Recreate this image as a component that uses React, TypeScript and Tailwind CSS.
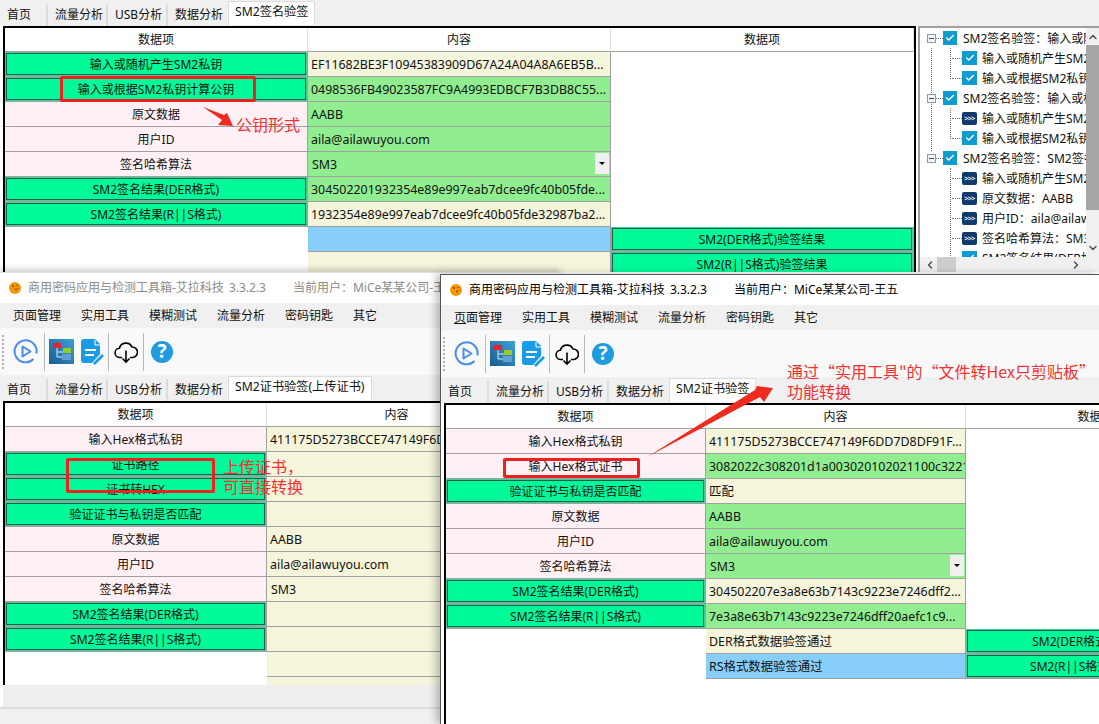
import { Check, ChevronUp, ChevronDown, ChevronLeft, ChevronRight } from 'lucide-react';

type CellKind = 'btn' | 'pink' | 'beige' | 'green' | 'blue' | 'blank';
type CellData = { k: CellKind; t?: string; combo?: boolean };

const btn = (t: string): CellData => ({ k: 'btn', t });
const pink = (t: string): CellData => ({ k: 'pink', t });
const beige = (t = ''): CellData => ({ k: 'beige', t });
const green = (t = ''): CellData => ({ k: 'green', t });
const blue = (t = ''): CellData => ({ k: 'blue', t });
const blank: CellData = { k: 'blank' };

const topRows: CellData[][] = [
  [btn('输入或随机产生SM2私钥'), beige('EF11682BE3F10945383909D67A24A04A8A6EB5B...'), blank],
  [btn('输入或根据SM2私钥计算公钥'), green('0498536FB49023587FC9A4993EDBCF7B3DB8C55...'), blank],
  [pink('原文数据'), green('AABB'), blank],
  [pink('用户ID'), green('aila@ailawuyou.com'), blank],
  [pink('签名哈希算法'), { k: 'green', t: 'SM3', combo: true }, blank],
  [btn('SM2签名结果(DER格式)'), green('304502201932354e89e997eab7dcee9fc40b05fde...'), blank],
  [btn('SM2签名结果(R||S格式)'), beige('1932354e89e997eab7dcee9fc40b05fde32987ba2...'), blank],
  [blank, blue(), btn('SM2(DER格式)验签结果')],
  [blank, beige(), btn('SM2(R||S格式)验签结果')],
];

const uploadRows: CellData[][] = [
  [pink('输入Hex格式私钥'), beige('411175D5273BCCE747149F6DD7D8DF91F...')],
  [btn('证书路径'), beige()],
  [btn('证书转HEX'), beige()],
  [btn('验证证书与私钥是否匹配'), beige()],
  [pink('原文数据'), beige('AABB')],
  [pink('用户ID'), beige('aila@ailawuyou.com')],
  [pink('签名哈希算法'), { k: 'beige', t: 'SM3', combo: true }],
  [btn('SM2签名结果(DER格式)'), beige()],
  [btn('SM2签名结果(R||S格式)'), beige()],
  [blank, beige()],
  [blank, beige()],
];

const certRows: CellData[][] = [
  [pink('输入Hex格式私钥'), beige('411175D5273BCCE747149F6DD7D8DF91F...'), blank],
  [pink('输入Hex格式证书'), green('3082022c308201d1a003020102021100c3221'), blank],
  [btn('验证证书与私钥是否匹配'), beige('匹配'), blank],
  [pink('原文数据'), green('AABB'), blank],
  [pink('用户ID'), green('aila@ailawuyou.com'), blank],
  [pink('签名哈希算法'), { k: 'green', t: 'SM3', combo: true }, blank],
  [btn('SM2签名结果(DER格式)'), beige('304502207e3a8e63b7143c9223e7246dff2...'), blank],
  [btn('SM2签名结果(R||S格式)'), green('7e3a8e63b7143c9223e7246dff20aefc1c9...'), blank],
  [blank, beige('DER格式数据验签通过'), btn('SM2(DER格式)验签结果')],
  [blank, blue('RS格式数据验签通过'), btn('SM2(R||S格式)验签结果')],
];

function TableCell({ cell }: { cell: CellData }) {
  if (cell.k === 'blank') return <div className="h-[25px] bg-white" />;
  if (cell.k === 'btn') {
    return (
      <div className="h-[25px] border-r border-b border-[#a0a0a0] bg-[#4ec99d] px-[1px] py-[1px]">
        <div className="flex h-[22px] items-center justify-center border border-[#13654a] bg-[#00fa9a] pt-[1px] text-center whitespace-nowrap">
          {cell.t}
        </div>
      </div>
    );
  }
  if (cell.k === 'pink') {
    return (
      <div className="flex h-[25px] items-center justify-center border-r border-b border-[#a0a0a0] bg-[#fff0f5] pt-[2px] whitespace-nowrap">
        {cell.t}
      </div>
    );
  }
  const color = cell.k === 'beige' ? 'bg-[#f5f5dc]' : cell.k === 'green' ? 'bg-[#90ee90]' : 'bg-[#87cefa]';
  return (
    <div className={`relative flex h-[25px] items-center overflow-hidden border-r border-b border-[#a0a0a0] pt-[2px] pl-[3px] whitespace-nowrap ${color}`}>
      <span className="text-[12.4px]">{cell.combo ? <span className="pl-[1px]">{cell.t}</span> : cell.t}</span>
      {cell.combo && (
        <div className="absolute top-[1px] right-[1px] flex h-[21px] w-[14px] items-center justify-center bg-[#f0f0f0]">
          <div className="h-0 w-0 border-x-[3px] border-t-[3px] border-x-transparent border-t-black" />
        </div>
      )}
    </div>
  );
}

function DataTable({ cols, heads, rows }: { cols: string; heads: string[]; rows: CellData[][] }) {
  return (
    <div className={`grid ${cols}`}>
      {heads.map((h, i) => (
        <div key={i} className="flex h-[24px] items-center justify-center border-r border-b border-r-[#e0e0e0] border-b-[#a0a0a0] bg-white pt-[1px]">
          {h}
        </div>
      ))}
      {rows.flat().map((c, i) => (
        <TableCell key={i} cell={c} />
      ))}
    </div>
  );
}

function TabBar({ active }: { active: string }) {
  return (
    <div className="flex h-[26px] shrink-0 items-end bg-[#f0f0f0] pl-[2px]">
      <div className="flex h-[22px] w-[46px] items-center border-r-2 border-[#dcdcdc] pl-[5px]">首页</div>
      <div className="flex h-[22px] w-[60px] items-center border-r-2 border-[#dcdcdc] pl-[7px]">流量分析</div>
      <div className="flex h-[22px] w-[60px] items-center border-r-2 border-[#dcdcdc] pl-[7px]">USB分析</div>
      <div className="flex h-[22px] w-[60px] items-center pl-[7px]">数据分析</div>
      <div className="mb-[1px] flex h-[24px] items-center border border-b-0 border-[#dcdcdc] bg-white px-[6px] pb-[2px] text-[12.2px] whitespace-nowrap">
        {active}
      </div>
    </div>
  );
}

function Logo() {
  return (
    <svg width="12" height="12" viewBox="0 0 12 12" className="shrink-0">
      <circle cx="6" cy="6" r="6" fill="#f39800" />
      <circle cx="4" cy="4" r="1" fill="#7a4a00" />
      <circle cx="8" cy="3.5" r="0.8" fill="#7a4a00" />
      <circle cx="7" cy="7.5" r="1" fill="#7a4a00" />
      <circle cx="9.5" cy="6.5" r="0.6" fill="#7a4a00" />
    </svg>
  );
}

function PlayIcon() {
  return (
    <svg width="25" height="25" viewBox="0 0 25 25" fill="none" stroke="#4a8cf0" strokeWidth="2" className="shrink-0">
      <path d="M20.5 20A11 11 0 1 1 23.4 14.5" />
      <path d="M15 22.7a11 11 0 0 0 2.5-.8" />
      <path d="M9.5 7.5L17.5 12.5L9.5 17.5Z" strokeLinejoin="round" />
    </svg>
  );
}

function NetworkIcon() {
  return (
    <svg width="25" height="25" viewBox="0 0 25 25" className="shrink-0">
      <defs>
        <linearGradient id="netbg" x1="0" y1="1" x2="1" y2="0">
          <stop offset="0" stopColor="#155d8f" />
          <stop offset="1" stopColor="#3fa0d8" />
        </linearGradient>
      </defs>
      <rect width="25" height="25" fill="url(#netbg)" />
      <path d="M8 9v9h6M8 13h7" fill="none" stroke="#d8e8f0" strokeWidth="1" />
      <rect x="4" y="4" width="8" height="5" fill="#e8202c" />
      <rect x="14" y="9" width="8" height="5" fill="#98cc20" />
      <rect x="13" y="15" width="9" height="6" fill="#5f9fd2" />
    </svg>
  );
}

function DocIcon() {
  return (
    <svg width="23" height="26" viewBox="0 0 23 26" className="shrink-0">
      <path d="M3 0H14L19 5V15L11 24H3A3 3 0 0 1 0 21V3A3 3 0 0 1 3 0Z" fill="#1a9be6" />
      <path d="M14 1V6H19" fill="none" stroke="#fff" strokeWidth="1" />
      <path d="M4 11H15M4 16H13" stroke="#fff" strokeWidth="2.2" />
      <path d="M13 25L22 16" stroke="#1a9be6" strokeWidth="2.6" />
    </svg>
  );
}

function CloudIcon() {
  return (
    <svg width="24" height="24" viewBox="0 0 24 24" fill="none" stroke="#000" strokeWidth="1.6" className="shrink-0">
      <path d="M8 17.5H6a4.6 4.6 0 0 1-.6-9.2A6.7 6.7 0 0 1 18 7a5.2 5.2 0 0 1 .5 10.5H16" />
      <path d="M12 10.5V22M8.5 18.5L12 22L15.5 18.5" />
    </svg>
  );
}

function Toolbar() {
  return (
    <div className="flex h-[47px] shrink-0 items-center bg-[#f9f9f9] pl-[2px]">
      <div className="h-[34px] w-[2px] border-l-2 border-dotted border-[#b0b0b0]" />
      <div className="ml-[9px]">
        <PlayIcon />
      </div>
      <div className="ml-[6px] h-[38px] w-[1px] bg-[#b8b8b8]" />
      <div className="ml-[4px]">
        <NetworkIcon />
      </div>
      <div className="ml-[7px]">
        <DocIcon />
      </div>
      <div className="ml-[4px] h-[38px] w-[1px] bg-[#b8b8b8]" />
      <div className="ml-[5px]">
        <CloudIcon />
      </div>
      <div className="ml-[5px] h-[38px] w-[1px] bg-[#b8b8b8]" />
      <div className="ml-[7px] flex h-[22px] w-[22px] items-center justify-center rounded-full bg-[#1f9be0] text-[19px] leading-none font-bold text-white">
        ?
      </div>
    </div>
  );
}

function Chrome({ inactive, underline }: { inactive?: boolean; underline?: boolean }) {
  const menus = ['实用工具', '模糊测试', '流量分析', '密码钥匙', '其它'];
  return (
    <>
      <div className={`flex h-[30px] shrink-0 items-center bg-white pl-[9px] whitespace-nowrap ${inactive ? 'text-[#8c8c8c]' : 'text-black'}`}>
        <Logo />
        <span className="ml-[7px]">商用密码应用与检测工具箱-艾拉科技</span>
        <span className="ml-[5px]">3.3.2.3</span>
        <span className="ml-[27px]">当前用户：MiCe某某公司-王五</span>
      </div>
      <div className="flex h-[25px] shrink-0 items-center gap-[20px] bg-[#f0f0f0] pt-[1px] pl-[13px]">
        <span>
          <span className={underline ? 'underline' : ''}>页</span>面管理
        </span>
        {menus.map((m) => (
          <span key={m}>{m}</span>
        ))}
      </div>
      <Toolbar />
    </>
  );
}

function CheckBox({ large }: { large?: boolean }) {
  return (
    <div className={`flex shrink-0 items-center justify-center bg-[#0e9bd0] ${large ? 'h-[14px] w-[14px]' : 'h-[14px] w-[15px]'}`}>
      <Check size={10} color="#fff" strokeWidth={3.5} />
    </div>
  );
}

function ArrowBox() {
  return (
    <div className="flex h-[13px] w-[15px] shrink-0 items-center justify-center rounded-[2px] bg-[#0f3a6e] text-[7px] leading-none font-bold tracking-[-0.5px] text-white">
      {'>>>'}
    </div>
  );
}

function TreeRoot({ text }: { text: string }) {
  return (
    <div className="flex h-[20px] items-center whitespace-nowrap">
      <div className="ml-[7px] flex h-[9px] w-[9px] shrink-0 items-center justify-center border border-[#8e99a8] bg-[#f2f4f8]">
        <div className="h-[1px] w-[5px] bg-[#2b4a80]" />
      </div>
      <div className="w-[7px] shrink-0 border-t border-dotted border-[#707070]" />
      <CheckBox large />
      <span className="ml-[6px] pt-[1px]">{text}</span>
    </div>
  );
}

function TreeLeaf({ text, done }: { text: string; done?: boolean }) {
  return (
    <div className="flex h-[20px] items-center whitespace-nowrap">
      <div className="ml-[32px] w-[10px] shrink-0 border-t border-dotted border-[#707070]" />
      {done ? <CheckBox /> : <ArrowBox />}
      <span className="ml-[5px] pt-[1px]">{text}</span>
    </div>
  );
}

function TreePanel() {
  return (
    <div className="relative ml-[2px] flex h-[246px] min-w-0 flex-1 border-t-2 border-l-2 border-[#a0a0a0] bg-white">
      <div className="relative h-[229px] min-w-0 flex-1 overflow-hidden">
        <div className="absolute top-[20px] left-[11px] h-[103px] border-l border-dotted border-[#707070]" />
        <div className="absolute top-[20px] left-[30px] h-[31px] border-l border-dotted border-[#707070]" />
        <div className="absolute top-[80px] left-[30px] h-[31px] border-l border-dotted border-[#707070]" />
        <div className="absolute top-[140px] left-[30px] h-[90px] border-l border-dotted border-[#707070]" />
        <div className="relative">
          <TreeRoot text="SM2签名验签：输入或随机产生SM2私钥" />
          <TreeLeaf done text="输入或随机产生SM2私钥" />
          <TreeLeaf done text="输入或根据SM2私钥计算公钥" />
          <TreeRoot text="SM2签名验签：输入或根据SM2私钥" />
          <TreeLeaf text="输入或随机产生SM2私钥" />
          <TreeLeaf done text="输入或根据SM2私钥计算公钥" />
          <TreeRoot text="SM2签名验签：SM2签名" />
          <TreeLeaf text="输入或随机产生SM2私钥" />
          <TreeLeaf text="原文数据：AABB" />
          <TreeLeaf text="用户ID：aila@ailawuyou.com" />
          <TreeLeaf text="签名哈希算法：SM3" />
          <TreeLeaf done text="SM2签名结果(DER格式)" />
        </div>
      </div>
      <div className="flex h-[229px] w-[13px] shrink-0 flex-col items-center bg-[#f0f0f0]">
        <ChevronUp size={12} strokeWidth={3} color="#505050" className="mt-[3px] shrink-0" />
        <div className="mt-[2px] h-[165px] w-full shrink-0 bg-[#a6a6a6]" />
        <ChevronDown size={12} strokeWidth={3} color="#505050" className="mt-[32px] shrink-0" />
      </div>
      <div className="absolute right-0 bottom-0 left-0 flex h-[15px] items-center bg-[#f0f0f0] pr-[13px]">
        <ChevronLeft size={12} strokeWidth={3} color="#505050" className="ml-[4px] shrink-0" />
        <div className="ml-[1px] h-[15px] w-[19px] bg-[#cdcdcd]" />
        <ChevronRight size={12} strokeWidth={3} color="#505050" className="mr-[4px] ml-auto shrink-0" />
      </div>
    </div>
  );
}

function Annotations() {
  return (
    <>
      <div className="absolute top-[76px] left-[60px] h-[26px] w-[196px] rounded-[2px] border-[3px] border-[#f02020]" />
      <div className="absolute top-[458px] left-[66px] h-[35px] w-[149px] rounded-[2px] border-[3px] border-[#f02020]" />
      <div className="absolute top-[458px] left-[503px] h-[20px] w-[137px] rounded-[2px] border-[3px] border-[#f02020]" />
      <svg width="1099" height="724" viewBox="0 0 1099 724" className="pointer-events-none absolute top-0 left-0">
        <polygon points="203,107 224,115 227,113 233,126 218,125 222,120" fill="#f02a1e" />
        <polygon points="647,457 755,390 757,386 773,388 764,402 760,397" fill="#f02a1e" />
      </svg>
      <div className="absolute top-[115px] left-[236px] text-[16px] leading-[20px] text-[#f53030]">公钥形式</div>
      <div className="absolute top-[457px] left-[223px] text-[16px] leading-[20px] text-[#f53030]">
        <div>上传证书，</div>
        <div>可直接转换</div>
      </div>
      <div className="absolute top-[361px] left-[787px] font-['Noto_Sans_CJK_SC',sans-serif] text-[16px] leading-[20px] whitespace-nowrap text-[#f53030]">
        <div>通过“实用工具"的“文件转Hex只剪贴板”</div>
        <div>功能转换</div>
      </div>
    </>
  );
}

export default function App() {
  return (
    <div className="relative h-[724px] w-[1099px] overflow-hidden bg-white font-['Noto_Sans','Noto_Sans_CJK_SC',sans-serif] text-[12px] text-[#111]">
      {/* SM2 signature window */}
      <div className="absolute top-0 left-0 flex h-[272px] w-[1099px] flex-col">
        <TabBar active="SM2签名验签" />
        <div className="flex min-h-0 flex-1">
          <div className="ml-[3px] h-[246px] w-[913px] shrink-0 overflow-hidden border-x-2 border-t-2 border-black">
            <DataTable cols="grid-cols-[303px_303px_303px]" heads={['数据项', '内容', '数据项']} rows={topRows} />
          </div>
          <TreePanel />
        </div>
      </div>

      {/* certificate upload window */}
      <div className="absolute top-[272px] left-0 flex h-[452px] w-[560px] flex-col border-t border-[#e0e0e0] bg-white shadow-[0_-3px_6px_rgba(0,0,0,0.18)]">
        <Chrome inactive />
        <TabBar active="SM2证书验签(上传证书)" />
        <div className="ml-[3px] h-[284px] shrink-0 overflow-hidden border-t-2 border-l-2 border-black">
          <DataTable cols="grid-cols-[262px_260px]" heads={['数据项', '内容']} rows={uploadRows} />
        </div>
        <div className="ml-[3px] h-[22px] shrink-0 bg-[#eeeeee]" />
        <div className="h-[2px] shrink-0 bg-[#dcdcdc]" />
        <div className="min-h-0 flex-1 bg-[#f0f0f0]" />
      </div>

      {/* certificate check window */}
      <div className="absolute top-[274px] left-[440px] flex h-[450px] w-[659px] flex-col overflow-hidden border-t border-l border-[#555] bg-white shadow-[-4px_0_8px_rgba(0,0,0,0.25)]">
        <Chrome underline />
        <TabBar active="SM2证书验签" />
        <div className="ml-[3px] min-h-0 flex-1 overflow-hidden border-t-2 border-l-2 border-black">
          <DataTable cols="grid-cols-[260px_260px_260px]" heads={['数据项', '内容', '数据项']} rows={certRows} />
        </div>
      </div>

      <Annotations />
    </div>
  );
}
